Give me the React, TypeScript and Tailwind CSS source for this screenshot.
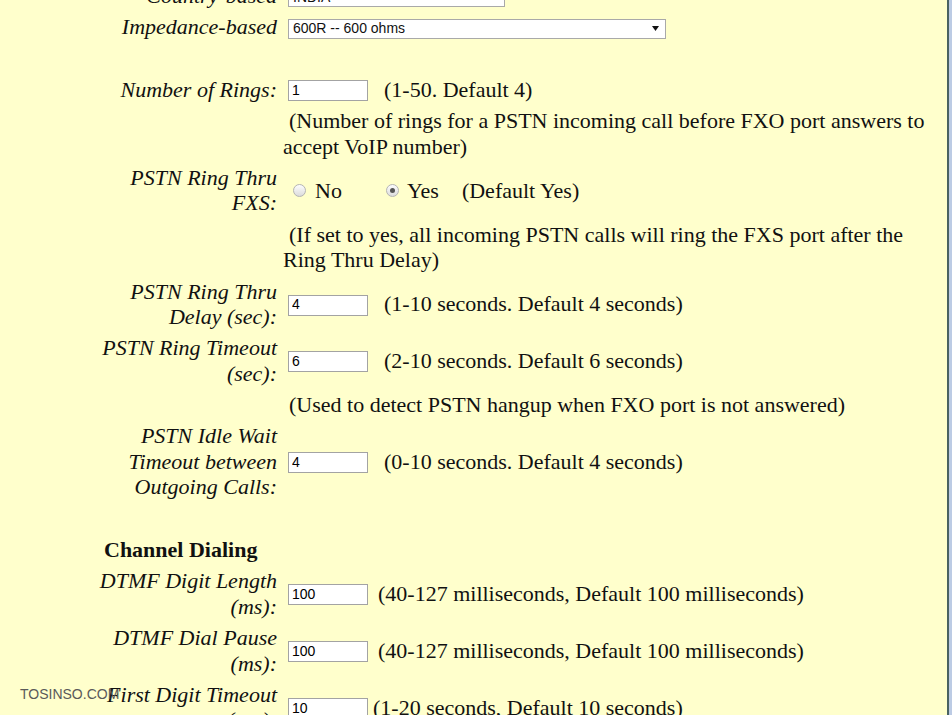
import React from 'react';

const sans = "font-['Liberation_Sans',Arial,sans-serif]";

const Row: React.FC<{ label?: React.ReactNode; bold?: boolean; children?: React.ReactNode }> = ({ label, bold, children }) => (
  <div className="flex">
    <div className={bold ? 'w-[279px] shrink-0 pl-[104px] font-bold' : 'w-[279px] shrink-0 pr-[2px] text-right italic'}>
      {label ?? '\u00a0'}
    </div>
    <div className="ml-[4px] flex-1 flex items-center min-w-0">{children}</div>
  </div>
);

const Field: React.FC<{ value: string }> = ({ value }) => (
  <input
    readOnly
    value={value}
    className={`ml-[5px] mt-[2px] w-[80px] h-[21px] shrink-0 bg-white border border-[#a3a3a3] px-[3px] ${sans} text-[14px] text-black outline-none`}
  />
);

const Select: React.FC<{ value: string; width: string; faded?: boolean }> = ({ value, width, faded }) => (
  <div className={`ml-[5px] mt-[3px] ${width} h-[20px] bg-white border border-[#a9a9a9] flex items-center justify-between pl-[4px] pr-[6px] ${sans} text-[14px]`}>
    <span>{value}</span>
    <svg width="7" height="5" viewBox="0 0 7 5">
      <path d="M0 0h7L3.5 5z" fill={faded ? '#b0b0b0' : '#111'} />
    </svg>
  </div>
);

const Radio: React.FC<{ checked?: boolean }> = ({ checked }) => (
  <span className="ml-[10px] mr-[3px] w-[13px] h-[13px] shrink-0 rounded-full border border-[#b4b4b4] bg-gradient-to-b from-[#fdfdfd] to-[#dcdcdc] flex items-center justify-center">
    {checked && <span className="w-[5px] h-[5px] rounded-full bg-[#555]" />}
  </span>
);

export default function App() {
  return (
    <div className="relative h-[715px] w-[952px] overflow-hidden bg-[#ffffcc] flex">
      <div className="flex-1 mt-[-17px] pr-[8px] font-['Liberation_Serif','Times_New_Roman',serif] text-[22px] leading-[25.5px] text-[#111] flex flex-col gap-[5.8px]">
        <Row label="Country-based">
          <Select value="INDIA" width="w-[217px]" faded />
        </Row>
        <Row label="Impedance-based">
          <Select value="600R -- 600 ohms" width="w-[378px]" />
        </Row>
        <Row />
        <Row label="Number of Rings:">
          <Field value="1" />
          <span className="ml-[16px]">(1-50. Default 4)</span>
        </Row>
        <Row>
          <div className="indent-[6px]">
            (Number of rings for a PSTN incoming call before FXO port answers to accept VoIP number)
          </div>
        </Row>
        <Row label={<>PSTN Ring Thru<br />FXS:</>}>
          <Radio />
          <span className="ml-[6px]">No</span>
          <span className="ml-[34px] flex items-center">
            <Radio checked />
          </span>
          <span className="ml-[5px]">Yes</span>
          <span className="ml-[23px]">(Default Yes)</span>
        </Row>
        <Row>
          <div className="indent-[6px]">
            (If set to yes, all incoming PSTN calls will ring the FXS port after the Ring Thru Delay)
          </div>
        </Row>
        <Row label={<>PSTN Ring Thru<br />Delay (sec):</>}>
          <Field value="4" />
          <span className="ml-[16px]">(1-10 seconds. Default 4 seconds)</span>
        </Row>
        <Row label={<>PSTN Ring Timeout<br />(sec):</>}>
          <Field value="6" />
          <span className="ml-[16px]">(2-10 seconds. Default 6 seconds)</span>
        </Row>
        <Row>
          <div className="indent-[6px]">(Used to detect PSTN hangup when FXO port is not answered)</div>
        </Row>
        <Row label={<>PSTN Idle Wait<br />Timeout between<br />Outgoing Calls:</>}>
          <Field value="4" />
          <span className="ml-[16px]">(0-10 seconds. Default 4 seconds)</span>
        </Row>
        <Row />
        <Row label="Channel Dialing" bold />
        <Row label={<>DTMF Digit Length<br />(ms):</>}>
          <Field value="100" />
          <span className="ml-[10px]">(40-127 milliseconds, Default 100 milliseconds)</span>
        </Row>
        <Row label={<>DTMF Dial Pause<br />(ms):</>}>
          <Field value="100" />
          <span className="ml-[10px]">(40-127 milliseconds, Default 100 milliseconds)</span>
        </Row>
        <Row label={<>First Digit Timeout<br />(sec):</>}>
          <Field value="10" />
          <span className="ml-[5px]">(1-20 seconds, Default 10 seconds)</span>
        </Row>
      </div>
      <div className="w-[2px] shrink-0 bg-[#4a6262]" />
      <div className="w-[3px] shrink-0 bg-[#bccbe4]" />

      {/* watermark */}
      <div className={`absolute left-[20px] top-[684px] ${sans} text-[14px] text-[#5a5a5a]`}>TOSINSO.COM</div>
    </div>
  );
}
